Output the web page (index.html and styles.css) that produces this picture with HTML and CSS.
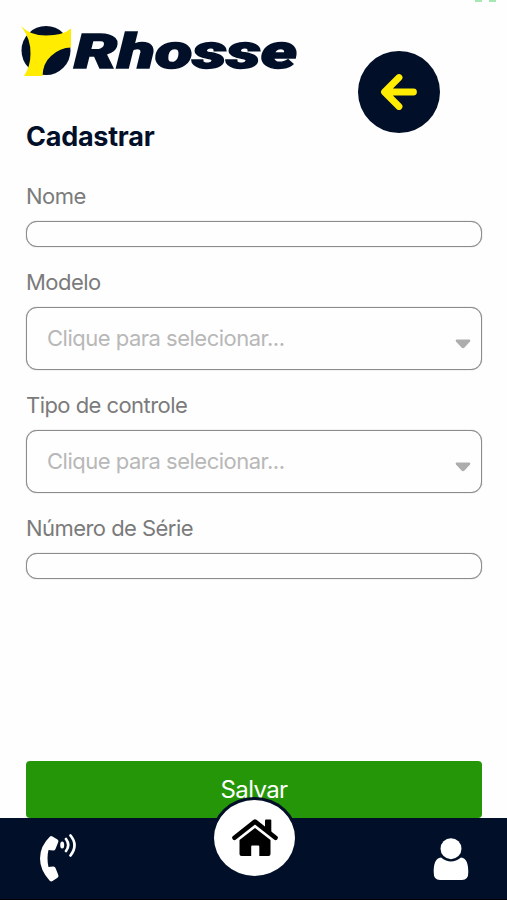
FILE: index.html
```
<!DOCTYPE html>
<html lang="pt-BR">
<head>
    <meta charset="UTF-8">
    <meta name="viewport" content="width=device-width, initial-scale=1.0">
    <title>Rhosse - Cadastrar</title>
    <link rel="stylesheet" href="styles.css">
</head>
<body>
    <div class="status"><span></span><span></span></div>

    <header class="header">
        <svg class="logo" width="290" height="66" viewBox="0 0 290 66">
            <circle cx="26" cy="25.500" r="24.500" fill="#010f29"/>
            <path d="M1 1 Q10 10.500 26 10.500 Q43 10.500 51 3.500 V22.500 Q40 22.500 31 31 Q23 38 22.500 51 H4 Q10.500 41 10.500 29 Q11 14 1 1 Z" fill="#ffec00"/>
            <text class="logo-text" x="54" y="43" textLength="223" lengthAdjust="spacingAndGlyphs">Rhosse</text>
        </svg>
        <button class="back" type="button" aria-label="Voltar">
            <svg width="38" height="38" viewBox="0 0 38 38">
                <path d="M33.500 19 H5 M19 4.500 L4.500 19 L19 33.500" />
            </svg>
        </button>
    </header>

    <main class="content">
        <h1>Cadastrar</h1>

        <form class="form">
            <div class="field">
                <label for="nome">Nome</label>
                <input id="nome" type="text">
            </div>
            <div class="field">
                <label>Modelo</label>
                <div class="select">
                    <span>Clique para selecionar...</span>
                    <svg class="caret" width="16" height="10" viewBox="0 0 16 10"><path d="M1.500 0.500 H14.500 Q16 1 15 2.500 L9.500 8.500 Q8 10 6.500 8.500 L1 2.500 Q0 1 1.500 0.500 Z"/></svg>
                </div>
            </div>
            <div class="field">
                <label>Tipo de controle</label>
                <div class="select">
                    <span>Clique para selecionar...</span>
                    <svg class="caret" width="16" height="10" viewBox="0 0 16 10"><path d="M1.500 0.500 H14.500 Q16 1 15 2.500 L9.500 8.500 Q8 10 6.500 8.500 L1 2.500 Q0 1 1.500 0.500 Z"/></svg>
                </div>
            </div>
            <div class="field">
                <label for="serie">Número de Série</label>
                <input id="serie" type="text">
            </div>
            <button class="save" type="submit">Salvar</button>
        </form>
    </main>

    <nav class="navbar">
        <a class="nav-phone">
            <svg width="38" height="50" viewBox="0 0 38 50">
                <path d="M10 2.500 Q11 1.500 12.500 2.500 L17.500 5.500 Q19 6.500 18.300 8 L15.500 15 Q15 16.500 13 16.500 L8.500 16 Q6.500 24 8.500 33 L13 32.500 Q15 32.300 15.500 34 L18.300 41 Q19 42.700 17.500 43.700 L12.500 47 Q11 48 9.500 46.500 Q0 36 0 24.500 Q0 12 10 2.500 Z" fill="#fff"/>
                <ellipse cx="22.200" cy="11" rx="2" ry="3.500" fill="#fff"/>
                <path d="M26 5 Q30.500 11 26 17 M30.500 1.500 Q38.500 11 30.500 21.500" fill="none" stroke="#fff" stroke-width="2.700" stroke-linecap="round"/>
            </svg>
        </a>
        <a class="nav-home">
            <svg width="46" height="38" viewBox="0 0 46 38">
                <path d="M2.500 18.700 L23 2.500 L43.500 18.700" fill="none" stroke="#000" stroke-width="4.600" stroke-linecap="round" stroke-linejoin="round"/>
                <path d="M33 1.500 Q33 0.500 34 0.500 H38.300 Q39.300 0.500 39.300 1.500 V15 L33 10 Z"/>
                <path d="M23 9 L38.500 21 V35 Q38.500 37 36.500 37 H27.300 V27.500 Q27.300 26.500 26.300 26.500 H20.200 Q19.200 26.500 19.200 27.500 V37 H9.500 Q7.500 37 7.500 35 V21 Z"/>
            </svg>
        </a>
        <a class="nav-user">
            <svg width="36" height="43" viewBox="0 0 36 43">
                <path d="M8 19.500 Q18 27.500 28 19.500 C34 20 35.300 27 35.300 34 Q35.500 42 29 42 H7 Q0.500 42 0.700 34 C0.700 27 2 20 8 19.500 Z" fill="#fff"/>
                <circle cx="18" cy="10.700" r="10.500" fill="#fff"/>
            </svg>
        </a>
    </nav>
</body>
</html>
```

FILE: styles.css
```
* {
    box-sizing: border-box;
}

body {
    margin: 0;
    height: 900px;
    display: flex;
    flex-direction: column;
    overflow: hidden;
    background: #fefefe;
    font-family: Inter, "Liberation Sans", sans-serif;
}

.status {
    display: flex;
    justify-content: flex-end;
    gap: 7px;
    height: 2px;
    padding-right: 11px;
}

.status span {
    width: 7px;
    background: #a5e8b4;
}

.header {
    display: flex;
    align-items: flex-start;
    justify-content: space-between;
    height: 117px;
    padding: 23px 67px 0 20px;
}

.logo {
    overflow: visible;
}

.logo-text {
    font-family: Roboto, "Liberation Sans", sans-serif;
    font-size: 48px;
    font-weight: 900;
    font-style: italic;
    fill: #010f29;
    stroke: #010f29;
    stroke-width: 1.5;
}

.back {
    display: flex;
    align-items: center;
    justify-content: center;
    width: 82px;
    height: 82px;
    margin-top: 26px;
    padding: 0;
    border: none;
    border-radius: 50%;
    background: #010f29;
}

.back path {
    fill: none;
    stroke: #ffec00;
    stroke-width: 6.8;
    stroke-linecap: round;
    stroke-linejoin: round;
}

.content {
    flex: 1;
    display: flex;
    flex-direction: column;
    padding: 0 25px 0 26px;
}

h1 {
    margin: 1px 0 31px;
    font-size: 27px;
    line-height: 33px;
    font-weight: 700;
    letter-spacing: -0.25px;
    color: #010f29;
}

.form {
    flex: 1;
    display: flex;
    flex-direction: column;
    gap: 23px;
}

.field {
    display: flex;
    flex-direction: column;
    gap: 12px;
}

label {
    font-size: 22px;
    line-height: 25px;
    letter-spacing: -0.55px;
    color: #7b7b7b;
}

input,
.select {
    width: 100%;
    border: 1px solid #8b8b8b;
    border-radius: 11px;
    background: #fefefe;
    box-shadow: 0 0 1px #8b8b8b;
}

input {
    height: 26px;
    padding: 0 12px;
    outline: none;
}

.select {
    display: flex;
    align-items: center;
    justify-content: space-between;
    height: 63px;
    padding: 0 10px 2px 20px;
    font-size: 22px;
    letter-spacing: -0.5px;
    color: #b8b8b8;
}

.caret {
    margin-top: 13px;
    fill: #adadad;
}

.save {
    height: 57px;
    margin-top: auto;
    padding: 0;
    border: none;
    border-radius: 4px;
    background: #249608;
    color: #fff;
    font-family: inherit;
    font-size: 24px;
    letter-spacing: -0.6px;
}

.navbar {
    display: flex;
    justify-content: space-between;
    height: 82px;
    padding: 0 38px 0 40px;
    background: #010f29;
    border-bottom: 1px solid #000;
}

.nav-phone {
    padding-top: 16px;
}

.nav-home {
    display: flex;
    align-items: center;
    justify-content: center;
    width: 87px;
    height: 82px;
    margin: -21px 2px 0 0;
    border: 3px solid #010f29;
    border-radius: 50%;
    background: #fff;
}

.nav-user {
    padding-top: 20px;
}
```
